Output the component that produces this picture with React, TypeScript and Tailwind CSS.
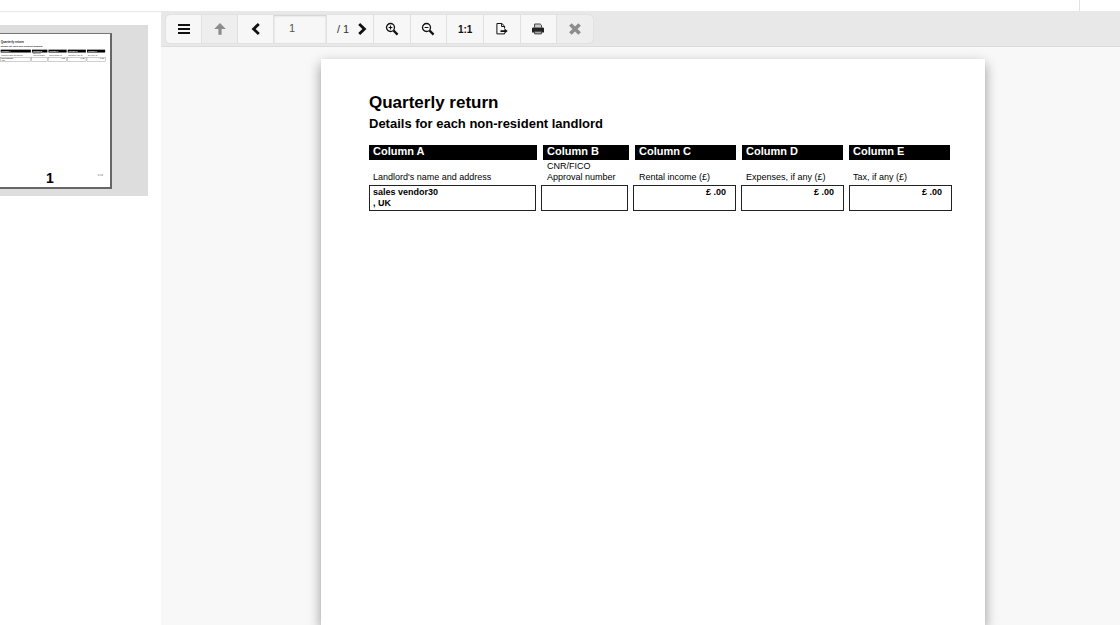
import type { ReactNode } from "react";

const columns = [
  { name: "Column A", label: ["Landlord's name and address"], value: ["sales vendor30", ", UK"], money: false },
  { name: "Column B", label: ["CNR/FICO", "Approval number"], value: [], money: false },
  { name: "Column C", label: ["Rental income (£)"], value: ["£ .00"], money: true },
  { name: "Column D", label: ["Expenses, if any (£)"], value: ["£ .00"], money: true },
  { name: "Column E", label: ["Tax, if any (£)"], value: ["£ .00"], money: true },
];

function Icon({ children }: { children: ReactNode }) {
  return (
    <svg viewBox="0 0 14 14" className="size-3.5 shrink-0" fill="none" stroke="currentColor" aria-hidden="true">
      {children}
    </svg>
  );
}

function ToolButton({ label, disabled, children }: { label: string; disabled?: boolean; children: ReactNode }) {
  return (
    <button
      type="button"
      aria-label={label}
      title={label}
      disabled={disabled}
      className="flex min-w-[35px] items-center justify-center bg-[#f7f7f7] text-[10px] font-bold text-[#111] disabled:bg-[#eeeeee] disabled:text-[#8c8c8c]"
    >
      {children}
    </button>
  );
}

function Magnifier({ plus }: { plus?: boolean }) {
  return (
    <Icon>
      <circle cx="5.5" cy="5.5" r="4" strokeWidth="1.3" />
      <path d="M8.6 8.6l4 4" strokeWidth="2.2" />
      <path d={plus ? "M3.6 5.5h3.8M5.5 3.6v3.8" : "M3.6 5.5h3.8"} strokeWidth="1.1" />
    </Icon>
  );
}

function Toolbar() {
  return (
    <div className="flex h-[35px] shrink-0 items-center border-b border-[#dcdcdc] bg-[#e8e8e8] px-[5px]">
      <div role="toolbar" aria-label="Report viewer" className="flex h-7 gap-px overflow-hidden rounded-sm bg-[#e0e0e0] outline-1 outline-[#e2e2e2]">
        <ToolButton label="Toggle menu">
          <Icon>
            <path d="M1 2.9h12M1 6.9h12M1 10.9h12" strokeWidth="2" />
          </Icon>
        </ToolButton>
        <ToolButton label="First page" disabled>
          <Icon>
            <path d="M7 1l5.8 6H8.6v5.7H5.4V7H1.2z" fill="currentColor" stroke="none" />
          </Icon>
        </ToolButton>
        <ToolButton label="Previous page">
          <Icon>
            <path d="M9.8 1.9L4.6 6.9l5.2 5" strokeWidth="2.8" />
          </Icon>
        </ToolButton>
        <input
          aria-label="Page number"
          defaultValue="1"
          className="w-[52px] bg-[#f7f7f7] px-[15px] pb-px text-[11px] text-[#555] shadow-[inset_0_1px_2px_#cccccc]"
        />
        <div className="flex w-[46px] items-center bg-[#f7f7f7] pl-2.5">
          <span className="w-4 text-[11px] whitespace-nowrap text-[#333]">
            / 1
          </span>
          <button type="button" aria-label="Next page" title="Next page" className="ml-0.5 flex h-full items-center text-[#111]">
            <Icon>
              <path d="M4.2 1.9l5.2 5-5.2 5" strokeWidth="2.8" />
            </Icon>
          </button>
        </div>
        <div className="grid w-[219px] grid-cols-6 gap-px">
          <ToolButton label="Zoom in">
            <Magnifier plus />
          </ToolButton>
          <ToolButton label="Zoom out">
            <Magnifier />
          </ToolButton>
          <ToolButton label="Actual size">1:1</ToolButton>
          <ToolButton label="Export">
            <Icon>
              <path d="M9.6 6.5V4.2L6.8 1.5H1.9v10.4h7.7v-1" strokeWidth="1" />
              <path d="M6.6 1.6v2.9h3" strokeWidth="1" />
              <path d="M5.5 8.2h4V6.6l3.2 2.5-3.2 2.5V10h-4z" fill="currentColor" stroke="none" />
            </Icon>
          </ToolButton>
          <ToolButton label="Print">
            <Icon>
              <path d="M3.6 5.5V2h5.6l1.3 1.3v2.2" fill="#ccc" stroke="#444" strokeWidth="1" />
              <path d="M1.8 5.5h10.4l.8.8v4.2H1V6.3z" fill="#222" stroke="none" />
              <path d="M3.6 9.3h6.8v2.6H3.6z" fill="#aaa" stroke="#444" strokeWidth="1" />
            </Icon>
          </ToolButton>
          <ToolButton label="Stop" disabled>
            <Icon>
              <path d="M2.4 2.4l9.2 9.2M11.6 2.4l-9.2 9.2" strokeWidth="3.6" />
            </Icon>
          </ToolButton>
        </div>
      </div>
    </div>
  );
}

function ReturnTable() {
  return (
    <table className="mt-3 block">
      <thead className="block">
        <tr className="grid grid-cols-[168px_86px_101px_101px_101px] gap-x-1.5">
          {columns.map((c) => (
            <th key={c.name} scope="col" className="h-[15px] bg-black px-1 text-left text-[11px] leading-[13px] font-bold text-white">
              {c.name}
            </th>
          ))}
        </tr>
      </thead>
      <tbody className="block">
        <tr className="grid grid-cols-[168px_86px_101px_101px_101px] gap-x-1.5">
          {columns.map((c) => (
            <td key={c.name} className="flex h-[25px] flex-col justify-end pb-0.5 pl-1 text-[9px] leading-[11px] whitespace-nowrap">
              {c.label.map((line) => (
                <span key={line}>{line}</span>
              ))}
            </td>
          ))}
        </tr>
        <tr className="grid grid-cols-[167px_87px_103px_103px_103px] gap-x-[5px]">
          {columns.map((c) => (
            <td
              key={c.name}
              className={
                "flex h-[26px] flex-col border border-[#222] pt-px text-[9px] leading-[11px] font-bold " +
                (c.money ? "items-end pr-[9px]" : "pl-[3px]")
              }
            >
              {c.value.map((line) => (
                <span key={line}>{line}</span>
              ))}
            </td>
          ))}
        </tr>
      </tbody>
    </table>
  );
}

const thumbBars = [
  [48, 168, 48, 167],
  [222, 86, 220, 87],
  [314, 101, 312, 103],
  [421, 101, 420, 103],
  [528, 101, 528, 103],
];

function Thumbnail() {
  return (
    <svg viewBox="0 0 656 840" className="block w-full" aria-hidden="true" fontWeight="bold" fill="#222">
      <text x="48" y="50" fontSize="17">Quarterly return</text>
      <text x="48" y="70" fontSize="13">Details for each non-resident landlord</text>
      {thumbBars.map(([x, w, bx, bw], i) => (
        <g key={x}>
          <rect x={x} y="87" width={w} height="16" fill="#000" />
          <text x={x + 4} y="99" fontSize="11" fill="#fff">{columns[i].name}</text>
          {columns[i].label.map((line, n, all) => (
            <text key={line} x={x + 4} y={124 - (all.length - 1 - n) * 11} fontSize="9" fontWeight="normal">
              {line}
            </text>
          ))}
          <rect x={bx} y="129" width={bw} height="25" fill="none" stroke="#777" strokeWidth="2" />
          {columns[i].value.map((line, n) => (
            <text
              key={line}
              x={columns[i].money ? bx + bw - 9 : bx + 4}
              y={139 + n * 11}
              fontSize="9"
              textAnchor={columns[i].money ? "end" : "start"}
            >
              {line}
            </text>
          ))}
        </g>
      ))}
      <path d="M588 784h10M602 784h16" stroke="#888" strokeWidth="5" />
    </svg>
  );
}

export default function App() {
  return (
    <div className="flex h-screen flex-col overflow-hidden bg-white font-['Liberation_Sans',Arial,sans-serif] text-black">
      <header className="flex h-3 shrink-0 justify-end border-b border-[#e8e8e8]">
        <div className="w-[41px] border-l border-[#e2e2e2]" />
      </header>
      <div className="flex min-h-0 flex-1">
        <aside className="w-[161px] shrink-0 overflow-hidden pt-[13px]">
          <div className="mr-[13px] h-[171px] bg-[#dddddd] pt-2">
            <a href="#page-1" aria-label="Page 1" className="relative -ml-2 block h-[156px] w-[120px] border-t border-r-2 border-b-2 border-t-[#777] border-r-[#666] border-b-[#666] bg-white">
              <Thumbnail />
              <span className="absolute inset-x-0 bottom-px pr-0.5 text-center text-sm leading-4 font-bold">1</span>
            </a>
          </div>
        </aside>
        <main className="flex min-w-0 flex-1 flex-col bg-[#f8f8f8]">
          <Toolbar />
          <div className="flex min-h-0 flex-1 overflow-hidden pt-3 pl-[25px]">
            <article id="page-1" className="mx-auto w-full max-w-[664px] bg-white px-12 pt-8 shadow-[0_5px_12px_rgba(0,0,0,0.4)]">
              <h1 className="pt-0.5 text-[17px] leading-5 font-bold">Quarterly return</h1>
              <h2 className="mt-0.5 text-[13px] leading-[18px] font-bold">Details for each non-resident landlord</h2>
              <ReturnTable />
            </article>
          </div>
        </main>
      </div>
    </div>
  );
}
